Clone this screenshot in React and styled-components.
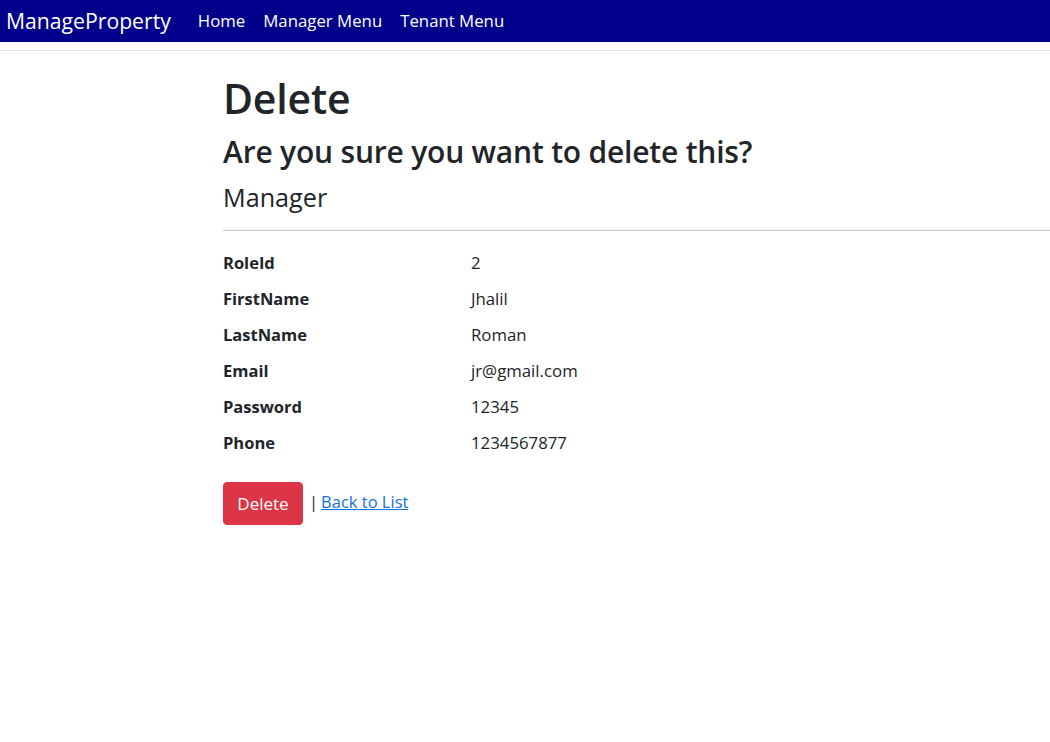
import React from "react";
import styled, { createGlobalStyle } from "styled-components";

const GlobalStyle = createGlobalStyle`
  html, body {
    margin: 0;
    padding: 0;
    background: #fff;
  }
  body {
    font-family: "Open Sans", "Noto Sans", "Liberation Sans", sans-serif;
    color: #212529;
    overflow: hidden;
  }
`;

const NavBar = styled.nav`
  height: 42px;
  background: #00008b;
  display: flex;
  align-items: center;
  padding: 0 6px 2px;
  box-sizing: border-box;
`;
const Brand = styled.a`
  color: #fff;
  font-size: 21.2px;
  text-decoration: none;
  margin-right: 27px;
`;
const NavLinks = styled.div`
  display: flex;
  gap: 18px;
`;
const NavLink = styled.a`
  color: #fff;
  font-size: 16.8px;
  text-decoration: none;
`;
const Divider = styled.div`
  margin-top: 8px;
  height: 1px;
  background: #e3e3e3;
`;

const Main = styled.main`
  padding-left: 223px;
`;
const Title = styled.h1`
  font-size: 41px;
  font-weight: 600;
  line-height: 48px;
  margin: 23px 0 0;
  letter-spacing: -0.2px;
`;
const Question = styled.h3`
  font-size: 30px;
  font-weight: 600;
  line-height: 36px;
  margin: 12px 0 0;
  letter-spacing: -0.2px;
`;
const EntityName = styled.h4`
  font-size: 25.2px;
  font-weight: 500;
  line-height: 30px;
  margin: 12px 0 0;
`;
const Rule = styled.hr`
  margin: 18px 0 0;
  border: 0;
  border-top: 1px solid #c8c8c8;
`;
const Details = styled.dl`
  display: grid;
  grid-template-columns: 248px 1fr;
  grid-auto-rows: 36px;
  align-items: center;
  margin: 13px 0 0;
  font-size: 16.5px;
`;
const Label = styled.dt`
  font-weight: 700;
`;
const Value = styled.dd`
  margin: 0;
  font-size: 16.8px;
`;
const Actions = styled.div`
  display: flex;
  align-items: center;
  margin-top: 22px;
  font-size: 16.5px;
`;
const DangerButton = styled.button`
  background: #dc3545;
  color: #fff;
  border: 1px solid #dc3545;
  border-radius: 4px;
  height: 43px;
  width: 80px;
  font-family: inherit;
  font-size: 17px;
  padding: 0;
  margin-right: 6px;
`;
const Link = styled.a`
  color: #1570e0;
  text-decoration: underline;
  margin-left: 3px;
  margin-top: -4px;
`;
const Sep = styled.span`
  margin-top: -4px;
`;

const fields = [
  ["RoleId", "2"],
  ["FirstName", "Jhalil"],
  ["LastName", "Roman"],
  ["Email", "jr@gmail.com"],
  ["Password", "12345"],
  ["Phone", "1234567877"],
];

export default function App() {
  return (
    <>
      <GlobalStyle />
      <header>
        <NavBar>
          <Brand href="#">ManageProperty</Brand>
          <NavLinks>
            <NavLink href="#">Home</NavLink>
            <NavLink href="#">Manager Menu</NavLink>
            <NavLink href="#">Tenant Menu</NavLink>
          </NavLinks>
        </NavBar>
        <Divider />
      </header>
      <Main>
        <Title>Delete</Title>
        <Question>Are you sure you want to delete this?</Question>
        <EntityName>Manager</EntityName>
        <Rule />
        <Details>
          {fields.map(([k, v]) => (
            <React.Fragment key={k}>
              <Label>{k}</Label>
              <Value>{v}</Value>
            </React.Fragment>
          ))}
        </Details>
        <Actions>
          <DangerButton>Delete</DangerButton>
          <Sep>|</Sep>
          <Link href="#">Back to List</Link>
        </Actions>
      </Main>
    </>
  );
}
